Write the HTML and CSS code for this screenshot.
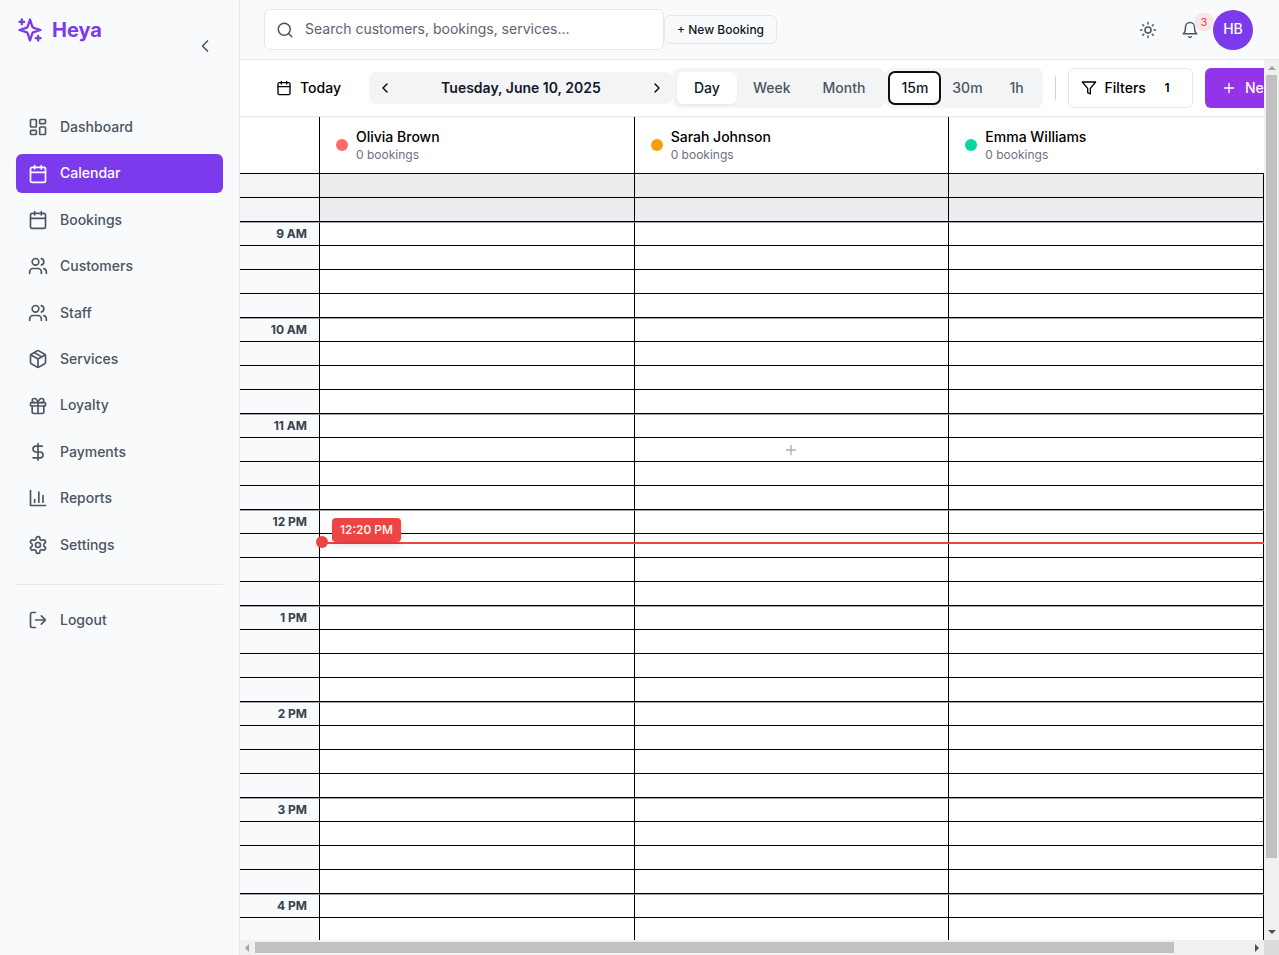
FILE: index.html
```html
<!DOCTYPE html>
<html lang="en">
<head>
<meta charset="utf-8">
<meta name="viewport" content="width=device-width, initial-scale=1">
<title>Heya – Calendar</title>
<link rel="stylesheet" href="styles.css">
</head>
<body>
<div class="app">
  <aside class="sidebar">
    <div class="sidebar-head">
      <a class="brand" href="#">
        <svg class="icon icon-28" viewBox="0 0 24 24"><path d="m12 3-1.912 5.813a2 2 0 0 1-1.275 1.275L3 12l5.813 1.912a2 2 0 0 1 1.275 1.275L12 21l1.912-5.813a2 2 0 0 1 1.275-1.275L21 12l-5.813-1.912a2 2 0 0 1-1.275-1.275L12 3Z"/><path d="M5 3v4M19 17v4M3 5h4M17 19h4"/></svg>
        <span>Heya</span>
      </a>
      <button class="collapse" type="button" aria-label="Collapse sidebar"><svg class="icon icon-20" viewBox="0 0 24 24"><path d="m15 18-6-6 6-6"/></svg></button>
    </div>
    <nav class="nav">
      <a class="nav-item" href="#"><svg class="icon icon-20" viewBox="0 0 24 24"><rect width="7" height="9" x="3" y="3" rx="1"/><rect width="7" height="5" x="14" y="3" rx="1"/><rect width="7" height="9" x="14" y="12" rx="1"/><rect width="7" height="5" x="3" y="16" rx="1"/></svg>Dashboard</a>
      <a class="nav-item active" href="#" aria-current="page"><svg class="icon icon-20" viewBox="0 0 24 24"><path d="M8 2v4M16 2v4M3 10h18"/><rect width="18" height="18" x="3" y="4" rx="2"/></svg>Calendar</a>
      <a class="nav-item" href="#"><svg class="icon icon-20" viewBox="0 0 24 24"><path d="M8 2v4M16 2v4M3 10h18"/><rect width="18" height="18" x="3" y="4" rx="2"/></svg>Bookings</a>
      <a class="nav-item" href="#"><svg class="icon icon-20" viewBox="0 0 24 24"><path d="M16 21v-2a4 4 0 0 0-4-4H6a4 4 0 0 0-4 4v2"/><circle cx="9" cy="7" r="4"/><path d="M22 21v-2a4 4 0 0 0-3-3.87M16 3.13a4 4 0 0 1 0 7.75"/></svg>Customers</a>
      <a class="nav-item" href="#"><svg class="icon icon-20" viewBox="0 0 24 24"><path d="M16 21v-2a4 4 0 0 0-4-4H6a4 4 0 0 0-4 4v2"/><circle cx="9" cy="7" r="4"/><path d="M22 21v-2a4 4 0 0 0-3-3.87M16 3.13a4 4 0 0 1 0 7.75"/></svg>Staff</a>
      <a class="nav-item" href="#"><svg class="icon icon-20" viewBox="0 0 24 24"><path d="m7.5 4.27 9 5.15"/><path d="M21 8a2 2 0 0 0-1-1.73l-7-4a2 2 0 0 0-2 0l-7 4A2 2 0 0 0 3 8v8a2 2 0 0 0 1 1.73l7 4a2 2 0 0 0 2 0l7-4A2 2 0 0 0 21 16Z"/><path d="m3.3 7 8.7 5 8.7-5M12 22V12"/></svg>Services</a>
      <a class="nav-item" href="#"><svg class="icon icon-20" viewBox="0 0 24 24"><rect x="3" y="8" width="18" height="4" rx="1"/><path d="M12 8v13M19 12v7a2 2 0 0 1-2 2H7a2 2 0 0 1-2-2v-7"/><path d="M7.5 8a2.5 2.5 0 0 1 0-5A4.8 8 0 0 1 12 8a4.8 8 0 0 1 4.5-5 2.5 2.5 0 0 1 0 5"/></svg>Loyalty</a>
      <a class="nav-item" href="#"><svg class="icon icon-20" viewBox="0 0 24 24"><path d="M12 2v20M17 5H9.5a3.5 3.5 0 0 0 0 7h5a3.5 3.5 0 0 1 0 7H6"/></svg>Payments</a>
      <a class="nav-item" href="#"><svg class="icon icon-20" viewBox="0 0 24 24"><path d="M3 3v18h18M18 17V9M13 17V5M8 17v-3"/></svg>Reports</a>
      <a class="nav-item" href="#"><svg class="icon icon-20" viewBox="0 0 24 24"><path d="M12.22 2h-.44a2 2 0 0 0-2 2v.18a2 2 0 0 1-1 1.73l-.43.25a2 2 0 0 1-2 0l-.15-.08a2 2 0 0 0-2.73.73l-.22.38a2 2 0 0 0 .73 2.73l.15.1a2 2 0 0 1 1 1.72v.51a2 2 0 0 1-1 1.74l-.15.09a2 2 0 0 0-.73 2.73l.22.38a2 2 0 0 0 2.73.73l.15-.08a2 2 0 0 1 2 0l.43.25a2 2 0 0 1 1 1.73V20a2 2 0 0 0 2 2h.44a2 2 0 0 0 2-2v-.18a2 2 0 0 1 1-1.73l.43-.25a2 2 0 0 1 2 0l.15.08a2 2 0 0 0 2.73-.73l.22-.39a2 2 0 0 0-.73-2.73l-.15-.08a2 2 0 0 1-1-1.74v-.5a2 2 0 0 1 1-1.74l.15-.09a2 2 0 0 0 .73-2.73l-.22-.38a2 2 0 0 0-2.73-.73l-.15.08a2 2 0 0 1-2 0l-.43-.25a2 2 0 0 1-1-1.73V4a2 2 0 0 0-2-2z"/><circle cx="12" cy="12" r="3"/></svg>Settings</a>
    </nav>
    <div class="sidebar-foot">
      <a class="nav-item" href="#"><svg class="icon icon-20" viewBox="0 0 24 24"><path d="M9 21H5a2 2 0 0 1-2-2V5a2 2 0 0 1 2-2h4M16 17l5-5-5-5M21 12H9"/></svg>Logout</a>
    </div>
  </aside>

  <div class="main">
    <header class="topbar">
      <label class="search">
        <svg class="icon icon-18" viewBox="0 0 24 24"><circle cx="11" cy="11" r="8"/><path d="m21 21-4.3-4.3"/></svg>
        <input type="search" aria-label="Search" placeholder="Search customers, bookings, services...">
      </label>
      <button class="quick-add" type="button">+ New Booking</button>
      <div class="top-actions">
        <button class="icon-button" type="button" aria-label="Toggle theme"><svg class="icon icon-18" viewBox="0 0 24 24"><circle cx="12" cy="12" r="4"/><path d="M12 2v2M12 20v2m-7.07-17.07 1.41 1.41m11.32 11.32 1.41 1.41M2 12h2m16 0h2M6.34 17.66l-1.41 1.41M19.07 4.93l-1.41 1.41"/></svg></button>
        <button class="icon-button" type="button" aria-label="Notifications, 3 unread"><svg class="icon icon-18" viewBox="0 0 24 24"><path d="M6 8a6 6 0 0 1 12 0c0 7 3 9 3 9H3s3-2 3-9M10.3 21a1.94 1.94 0 0 0 3.4 0"/></svg><span class="badge">3</span></button>
        <button class="avatar" type="button" aria-label="Account">HB</button>
      </div>
    </header>

    <div class="scroller">
      <main class="view">
        <div class="toolbar">
          <button class="today" type="button"><svg class="icon icon-16" viewBox="0 0 24 24"><path d="M8 2v4M16 2v4M3 10h18"/><rect width="18" height="18" x="3" y="4" rx="2"/></svg>Today</button>
          <div class="date-nav">
            <button type="button" aria-label="Previous day"><svg class="icon icon-16" viewBox="0 0 24 24"><path d="m15 18-6-6 6-6"/></svg></button>
            <span class="date">Tuesday, June 10, 2025</span>
            <button type="button" aria-label="Next day"><svg class="icon icon-16" viewBox="0 0 24 24"><path d="m9 18 6-6-6-6"/></svg></button>
          </div>
          <div class="segment">
            <button class="selected" type="button">Day</button><button type="button">Week</button><button type="button">Month</button>
          </div>
          <div class="segment compact">
            <button class="selected focused" type="button">15m</button><button type="button">30m</button><button type="button">1h</button>
          </div>
          <div class="toolbar-end">
            <span class="divider"></span>
            <button class="filters" type="button"><svg class="icon icon-16" viewBox="0 0 24 24"><path d="M22 3H2l8 9.46V19l4 2v-8.54L22 3z"/></svg>Filters<span class="count">1</span></button>
            <button class="new-booking" type="button"><svg class="icon icon-16" viewBox="0 0 24 24"><path d="M5 12h14M12 5v14"/></svg>New Booking</button>
          </div>
        </div>

        <div class="staff-row">
          <div class="staff-corner"></div>
          <div class="staff"><span class="dot coral"></span><div><div class="staff-name">Olivia Brown</div><div class="staff-count">0 bookings</div></div></div>
          <div class="staff"><span class="dot amber"></span><div><div class="staff-name">Sarah Johnson</div><div class="staff-count">0 bookings</div></div></div>
          <div class="staff"><span class="dot teal"></span><div><div class="staff-name">Emma Williams</div><div class="staff-count">0 bookings</div></div></div>
        </div>

        <div class="schedule">
          <div id="slots"></div>
          <div class="now" id="now"><span class="now-dot"></span><span class="now-label">12:20 PM</span></div>
        </div>
      </main>
      <div class="bar vertical" aria-hidden="true">
        <svg class="arrow off" viewBox="0 0 15 15"><path d="M4 10h8L8 6z"/></svg>
        <div class="track"><div class="thumb" style="height:92.1%"></div></div>
        <svg class="arrow" viewBox="0 0 15 15"><path d="M4 5h8L8 9z"/></svg>
      </div>
      <div class="bar horizontal" aria-hidden="true">
        <svg class="arrow off" viewBox="0 0 15 15"><path d="M9 4v8L5 8z"/></svg>
        <div class="track"><div class="thumb" style="width:92.5%"></div></div>
        <svg class="arrow" viewBox="0 0 15 15"><path d="M6 4v8l4-4z"/></svg>
      </div>
      <div class="bar-corner"></div>
    </div>
  </div>
</div>
<script src="calendar.js"></script>
</body>
</html>
```
FILE: styles.css
```css
:root {
  --purple: #7c3aed;
  --line: #e5e7eb;
  --soft: #f9fafc;
  --muted: #f3f4f6;
  --text: #4b5563;
  --ink: #111827;
}

* { box-sizing: border-box; }

body {
  margin: 0;
  font-family: Inter, "Liberation Sans", sans-serif;
  font-size: 14px;
  line-height: 1.6;
  color: #000;
  background: #fff;
}

button, input {
  font: inherit;
  color: inherit;
  border: 0;
  padding: 0;
  margin: 0;
  background: none;
}

button { font-weight: 500; white-space: nowrap; }
a { color: inherit; text-decoration: none; }

.icon {
  flex: none;
  display: block;
  fill: none;
  stroke: currentColor;
  stroke-width: 2;
  stroke-linecap: round;
  stroke-linejoin: round;
}
.icon-16 { width: 16px; height: 16px; }
.icon-18 { width: 18px; height: 18px; }
.icon-20 { width: 20px; height: 20px; }
.icon-28 { width: 28px; height: 28px; }

.app {
  display: grid;
  grid-template-columns: 240px minmax(0, 1fr);
  height: 100vh;
  overflow: hidden;
}

/* Sidebar */
.sidebar {
  background: var(--soft);
  border-right: 1px solid var(--line);
  color: var(--text);
  padding: 16px;
}
.sidebar-head {
  display: flex;
  justify-content: space-between;
  align-items: flex-start;
}
.brand {
  display: flex;
  align-items: center;
  gap: 8px;
  height: 28px;
  color: var(--purple);
  font-size: 20px;
  font-weight: 700;
}
.collapse { margin-top: 12px; padding: 8px; }
.nav {
  display: flex;
  flex-direction: column;
  gap: 8px;
  padding: 44px 0 20px;
  border-bottom: 1px solid var(--line);
}
.nav-item {
  display: flex;
  align-items: center;
  gap: 12px;
  padding: 8px 12px;
  border-radius: 6px;
  font-weight: 500;
}
.nav-item.active { background: var(--purple); color: #fff; }
.sidebar-foot { padding-top: 16px; }

/* Top bar */
.main {
  display: flex;
  flex-direction: column;
  min-width: 0;
  min-height: 0;
}
.topbar {
  display: flex;
  align-items: center;
  height: 60px;
  flex: none;
  padding: 0 26px 0 24px;
  background: var(--soft);
  border-bottom: 1px solid var(--line);
}
.search {
  display: flex;
  align-items: center;
  gap: 11px;
  flex: 0 1 400px;
  height: 41px;
  padding: 0 11px;
  background: #fff;
  border: 1px solid var(--line);
  border-radius: 6px;
  color: var(--text);
}
.search input { flex: 1; min-width: 0; outline: 0; appearance: none; }
.search input::placeholder { color: #5b6472; opacity: 1; }
.quick-add {
  padding: 4px 12px;
  border: 1px solid var(--line);
  border-radius: 6px;
  font-size: 12px;
  color: var(--ink);
}
.top-actions {
  display: flex;
  align-items: center;
  margin-left: auto;
  color: var(--text);
}
.icon-button { position: relative; padding: 12px; }
.badge {
  position: absolute;
  top: 4px;
  left: 25px;
  width: 20px;
  height: 18px;
  border-radius: 10px;
  background: #fae6e9;
  color: #ef4444;
  font-size: 11px;
  line-height: 18px;
  font-weight: 400;
}
.avatar {
  position: relative;
  width: 40px;
  height: 40px;
  border-radius: 50%;
  background: var(--purple);
  color: #fff;
  margin-left: 2px;
}

/* Scroll frame */
.scroller {
  flex: 1;
  min-height: 0;
  display: grid;
  grid-template: minmax(0, 1fr) 15px / minmax(0, 1fr) 15px;
}
.view { overflow: hidden; }
.bar { display: flex; background: #f0f0f0; }
.vertical { flex-direction: column; }
.vertical .track { padding: 0 2px; }
.horizontal .track { padding: 2px 0; }
.track { flex: 1; min-width: 0; min-height: 0; }
.thumb { width: 100%; height: 100%; background: #c1c1c1; }
.arrow { width: 15px; height: 15px; flex: none; fill: #505050; }
.arrow.off { fill: #a3a3a3; }
.bar-corner { background: #dcdcdc; }

/* Toolbar */
.toolbar {
  position: relative;
  display: flex;
  align-items: center;
  padding: 8px 24px;
  border-bottom: 1px solid var(--line);
  background: #fff;
  box-shadow: 0 1px 2px rgba(0, 0, 0, .05);
}
.toolbar > * { flex: none; }
.today {
  display: flex;
  align-items: center;
  gap: 8px;
  padding: 0 12px;
  margin-right: 16px;
}
.date-nav {
  display: flex;
  height: 32px;
  border-radius: 8px;
  background: var(--muted);
}
.date-nav button { padding: 8px; }
.date {
  min-width: 240px;
  line-height: 32px;
  text-align: center;
  font-weight: 600;
  color: var(--ink);
}
.segment {
  display: flex;
  padding: 4px;
  border-radius: 8px;
  background: var(--muted);
  color: var(--text);
}
.segment button { height: 32px; min-width: 60px; padding: 0 16px; border-radius: 6px; }
.segment.compact button { min-width: 44px; padding: 0 12px; }
.segment .selected {
  background: #fff;
  color: var(--ink);
  box-shadow: 0 1px 2px rgba(0, 0, 0, .05);
}
.segment .focused { outline: 2px solid #101010; outline-offset: -1px; }
.toolbar-end {
  display: flex;
  align-items: center;
  gap: 12px;
  padding-left: 12px;
}
.divider { width: 1px; height: 24px; background: #d1d5db; }
.filters, .new-booking {
  display: flex;
  align-items: center;
  gap: 8px;
  height: 40px;
  border-radius: 6px;
}
.filters { padding: 0 12px; border: 1px solid var(--line); }
.count { width: 26px; font-size: 12px; font-weight: 600; text-align: center; }
.new-booking { padding: 0 16px; background: #9333ea; color: #fff; }

/* Staff header and slots */
.staff-row, .slot {
  display: grid;
  grid-template-columns: 80px repeat(3, minmax(0, 1fr));
}
.staff-row { border-bottom: 1px solid #000; }
.staff-corner, .staff { border-right: 1px solid #000; }
.staff {
  display: flex;
  align-items: center;
  gap: 8px;
  height: 56px;
  padding: 0 16px;
}
.staff:last-child { border-right-color: transparent; }
.staff-name { font-weight: 500; line-height: 20px; }
.staff-count { font-size: 12px; line-height: 16px; color: #6b7280; }
.dot { width: 12px; height: 12px; border-radius: 50%; }
.coral { background: #ff6b6b; }
.amber { background: #f59e0b; }
.teal { background: #06d6a0; }

.schedule { position: relative; }
.slot { grid-template-rows: 24px; }
.slot > * {
  border-right: 1px solid #000;
  border-bottom: 1px solid #000;
}
.slot.hour > * { border-top: 1px solid #9ca3af; }
.time {
  padding-right: 12px;
  background: var(--soft);
  color: #374151;
  font-size: 12px;
  font-weight: 700;
  line-height: 22px;
  text-align: right;
}
.cell { display: grid; place-items: center; color: #a9afba; }
.closed .time { background: var(--muted); }
.closed .cell { background: #ebedef; }

/* Current time marker */
.now {
  position: absolute;
  left: 80px;
  right: 0;
  height: 2px;
  background: #ef4444;
}
.now-dot {
  position: absolute;
  left: -4px;
  top: -6px;
  width: 12px;
  height: 12px;
  border-radius: 50%;
  background: #ef4444;
}
.now-label {
  position: absolute;
  left: 12px;
  top: -24px;
  padding: 0 8px;
  border-radius: 4px;
  background: #ef4444;
  color: #fff;
  font-size: 12px;
  font-weight: 500;
  line-height: 24px;
  white-space: nowrap;
  box-shadow: 0 4px 6px rgba(0, 0, 0, .1);
}
```
FILE: calendar.js
```js
const SLOT_HEIGHT = 24;
const FIRST_SLOT = 8 * 60 + 30;
const OPENING = 9 * 60;
const CLOSING = 17 * 60;
const HOVERED = { minute: 11 * 60 + 15, column: 1 };
const NOW = 12 * 60 + 20;
const PLUS = '<svg class="icon icon-16" viewBox="0 0 24 24"><path d="M5 12h14M12 5v14"/></svg>';

const slots = document.getElementById('slots');
for (let minute = FIRST_SLOT; minute < CLOSING; minute += 15) {
  const row = document.createElement('div');
  const onHour = minute % 60 === 0;
  row.className = 'slot' + (onHour ? ' hour' : '') + (minute < OPENING ? ' closed' : '');
  const hour = minute / 60;
  const label = onHour ? `${hour > 12 ? hour - 12 : hour} ${hour < 12 ? 'AM' : 'PM'}` : '';
  let html = `<div class="time">${label}</div>`;
  for (let column = 0; column < 3; column++) {
    const hovered = minute === HOVERED.minute && column === HOVERED.column;
    html += `<div class="cell">${hovered ? PLUS : ''}</div>`;
  }
  row.innerHTML = html;
  slots.append(row);
}
document.getElementById('now').style.top = (NOW - FIRST_SLOT) / 15 * SLOT_HEIGHT + 'px';
```
